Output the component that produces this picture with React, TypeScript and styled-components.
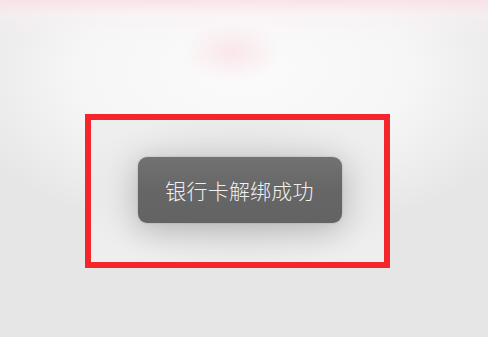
import styled, { createGlobalStyle } from "styled-components";

const GlobalStyle = createGlobalStyle`
  html, body {
    margin: 0;
    padding: 0;
    width: 488px;
    height: 337px;
    overflow: hidden;
  }
  body {
    font-family: "Noto Sans CJK SC", "Noto Sans", sans-serif;
  }
`;

const Screen = styled.div`
  width: 488px;
  height: 337px;
  background:
    radial-gradient(ellipse 50px 30px at 232px 52px, rgba(249, 222, 227, 0.7), rgba(249, 222, 227, 0) 100%),
    linear-gradient(to bottom, rgba(250, 225, 230, 0.9) 0px, rgba(252, 240, 242, 0.5) 14px, rgba(255, 255, 255, 0) 40px),
    radial-gradient(ellipse 300px 170px at 244px 70px, #fbfbfb 0%, #f6f6f6 55%, rgba(232, 232, 232, 0) 100%),
    #e6e6e6;
  display: flex;
  flex-direction: column;
  padding: 114px 0 0 85px;
  box-sizing: border-box;
`;

const Frame = styled.div`
  width: 305px;
  height: 154px;
  box-sizing: border-box;
  border: 6.5px solid #f5262b;
  display: flex;
  align-items: center;
  padding-left: 46.5px;
  background: radial-gradient(ellipse 170px 80px at 50% 50%, #d9d9d9 0%, #e6e6e6 60%, #eeeeee 100%);
`;

const Toast = styled.div`
  width: 204px;
  height: 66px;
  margin-bottom: 2px;
  border-radius: 9px;
  background: linear-gradient(to bottom, #727272, #666666 50%, #636363);
  box-shadow: 0 6px 30px rgba(0, 0, 0, 0.22), 0 0 2px rgba(0, 0, 0, 0.2);
  color: #f0f0f0;
  font-size: 21px;
  font-weight: 300;
  letter-spacing: 0.2px;
  display: flex;
  align-items: center;
  justify-content: center;
`;

const App = () => {
  return (
    <>
      <GlobalStyle />
      <Screen>
        <Frame>
          <Toast>银行卡解绑成功</Toast>
        </Frame>
      </Screen>
    </>
  );
};

export default App;
